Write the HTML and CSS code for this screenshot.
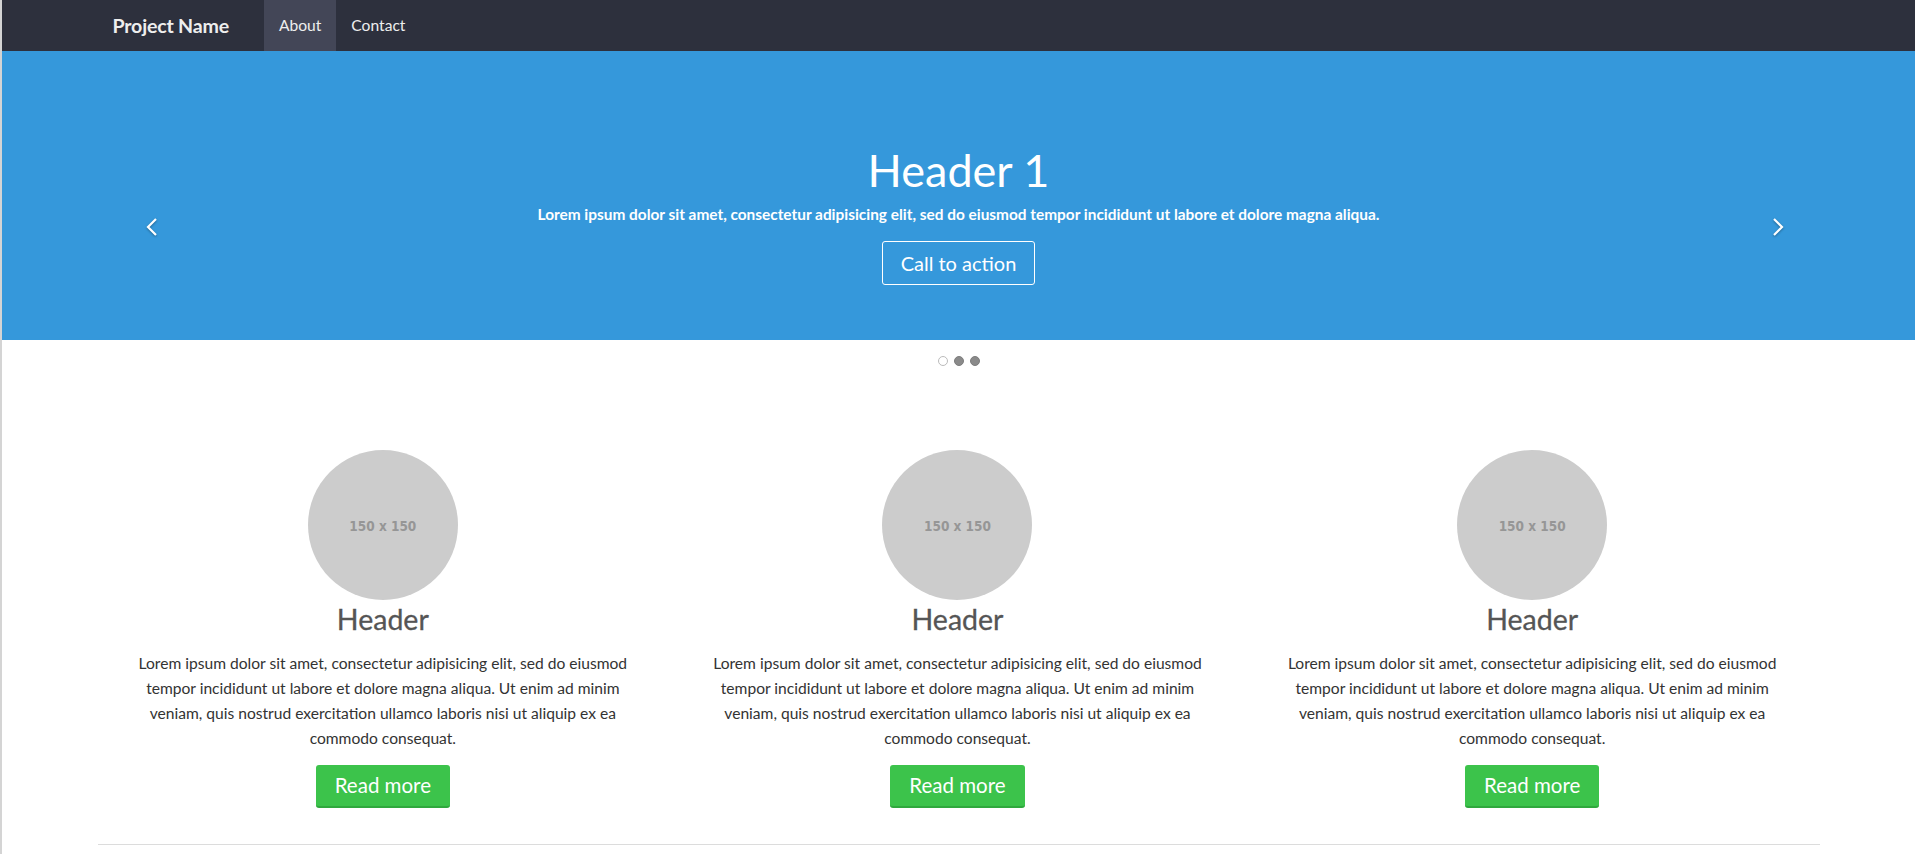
FILE: index.html
```html
<!DOCTYPE html>
<html lang="en">
<head>
<meta charset="utf-8">
<title>Project Name</title>
<link rel="stylesheet" href="styles.css">
</head>
<body>
<nav class="navbar">
  <div class="container nav-inner">
    <a class="brand" href="#">Project Name</a>
    <ul class="nav-links">
      <li><a class="active" href="#">About</a></li>
      <li><a href="#">Contact</a></li>
    </ul>
  </div>
</nav>

<section class="hero">
  <a class="chev chev-left" href="#" aria-label="Previous">
    <svg width="14" height="20" viewBox="0 0 14 20"><polyline points="11,2 3,10 11,18" fill="none" stroke="#fff" stroke-width="2.2"/></svg>
  </a>
  <div class="hero-content">
    <h1 class="hero-title">Header 1</h1>
    <p class="hero-lead">Lorem ipsum dolor sit amet, consectetur adipisicing elit, sed do eiusmod tempor incididunt ut labore et dolore magna aliqua.</p>
    <a class="btn-outline" href="#">Call to action</a>
  </div>
  <a class="chev chev-right" href="#" aria-label="Next">
    <svg width="14" height="20" viewBox="0 0 14 20"><polyline points="3,2 11,10 3,18" fill="none" stroke="#fff" stroke-width="2.2"/></svg>
  </a>
</section>

<div class="dots">
  <span class="dot dot-active"></span>
  <span class="dot"></span>
  <span class="dot"></span>
</div>

<main class="container">
  <div class="features">
    <div class="feature">
      <div class="placeholder">150 x 150</div>
      <h2 class="feature-title">Header</h2>
      <p class="feature-text">Lorem ipsum dolor sit amet, consectetur adipisicing elit, sed do eiusmod tempor incididunt ut labore et dolore magna aliqua. Ut enim ad minim veniam, quis nostrud exercitation ullamco laboris nisi ut aliquip ex ea commodo consequat.</p>
      <a class="btn-green" href="#">Read more</a>
    </div>
    <div class="feature">
      <div class="placeholder">150 x 150</div>
      <h2 class="feature-title">Header</h2>
      <p class="feature-text">Lorem ipsum dolor sit amet, consectetur adipisicing elit, sed do eiusmod tempor incididunt ut labore et dolore magna aliqua. Ut enim ad minim veniam, quis nostrud exercitation ullamco laboris nisi ut aliquip ex ea commodo consequat.</p>
      <a class="btn-green" href="#">Read more</a>
    </div>
    <div class="feature">
      <div class="placeholder">150 x 150</div>
      <h2 class="feature-title">Header</h2>
      <p class="feature-text">Lorem ipsum dolor sit amet, consectetur adipisicing elit, sed do eiusmod tempor incididunt ut labore et dolore magna aliqua. Ut enim ad minim veniam, quis nostrud exercitation ullamco laboris nisi ut aliquip ex ea commodo consequat.</p>
      <a class="btn-green" href="#">Read more</a>
    </div>
  </div>
  <hr class="divider">
</main>
</body>
</html>
```

FILE: styles.css
```css
* { box-sizing: border-box; }

html, body { margin: 0; padding: 0; }

body {
  font-family: Lato, "Liberation Sans", Arial, sans-serif;
  color: #333;
  background: #fff;
  border-left: 2px solid #d4d4d4;
  min-height: 100vh;
}

a { text-decoration: none; }

.container {
  width: 1722px;
  margin: 0 auto;
}

/* Navbar */
.navbar {
  background: #2d303d;
  height: 51px;
}
.nav-inner {
  display: flex;
  align-items: stretch;
  height: 51px;
  padding: 0 15px;
}
.brand {
  color: #eee;
  font-weight: 700;
  font-size: 19.6px;
  line-height: 51px;
  margin-right: 35px;
  letter-spacing: -0.2px;
}
.nav-links {
  display: flex;
  list-style: none;
  margin: 0;
  padding: 0;
}
.nav-links a {
  display: block;
  color: #eee;
  font-size: 15.6px;
  line-height: 51px;
  padding: 0 15px;
}
.nav-links a.active { background: #434657; }

/* Hero */
.hero {
  position: relative;
  background: #3598db;
  height: 289px;
  padding-top: 95px;
  color: #fff;
}
.hero-content {
  display: flex;
  flex-direction: column;
  align-items: center;
  text-align: center;
}
.hero-title {
  margin: 0;
  font-size: 45px;
  font-weight: 400;
  line-height: 49px;
}
.hero-lead {
  margin: 9px 0 17px;
  font-size: 15.4px;
  font-weight: 700;
  line-height: 20px;
}
.btn-outline {
  display: inline-block;
  color: #fff;
  border: 1px solid #fff;
  border-radius: 3px;
  font-size: 20px;
  line-height: 24px;
  padding: 9px 18px;
}
.chev {
  position: absolute;
  top: 166px;
  display: block;
  filter: drop-shadow(0 1px 1px rgba(0,0,0,0.35));
}
.chev svg { display: block; }
.chev-left { left: 143px; }
.chev-right { right: 130px; }

/* Dots */
.dots {
  display: flex;
  justify-content: center;
  gap: 6px;
  margin-top: 16px;
  height: 10px;
}
.dot {
  width: 10px;
  height: 10px;
  border-radius: 50%;
  background: #8a8a8a;
  border: 1px solid #7d7d7d;
}
.dot-active {
  background: #fff;
  border-color: #bbb;
}

/* Features */
.features {
  display: grid;
  grid-template-columns: repeat(3, 1fr);
  padding-top: 84px;
  margin-left: -2px;
}
.feature {
  display: flex;
  flex-direction: column;
  align-items: center;
  text-align: center;
}
.placeholder {
  width: 150px;
  height: 150px;
  border-radius: 50%;
  background: #cccccc;
  color: #969696;
  display: flex;
  align-items: center;
  justify-content: center;
  font-family: "DejaVu Sans Condensed", "Liberation Sans", sans-serif;
  font-weight: 700;
  font-size: 13.5px;
  padding-top: 2px;
}
.feature-title {
  margin: 4px 0 0;
  font-size: 28.5px;
  font-weight: 400;
  line-height: 31px;
  color: #555;
  -webkit-text-stroke: 0.3px #555;
}
.feature-text {
  margin: 16px 0 0;
  max-width: 500px;
  font-size: 15.6px;
  line-height: 25px;
  color: #333;
}
.btn-green {
  display: inline-block;
  margin-top: 14px;
  background: #3cc34b;
  border-bottom: 2px solid #2fa83d;
  border-radius: 3px;
  color: #fff;
  font-size: 20.5px;
  line-height: 25px;
  padding: 8px 19px;
}
.divider {
  margin: 36px 0 0;
  border: 0;
  border-top: 1px solid #dcdcdc;
}
```
